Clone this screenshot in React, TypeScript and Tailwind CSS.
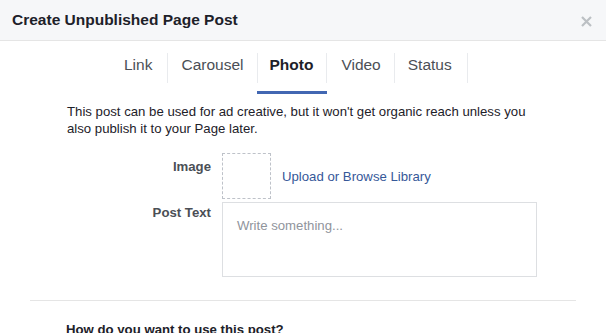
import React from "react";

const tabs = [
  { label: "Link", pad: "pl-[14px] pr-[15px]" },
  { label: "Carousel", pad: "pl-[13px] pr-[14px]" },
  { label: "Photo", pad: "pl-[11px] pr-[13px]" },
  { label: "Video", pad: "pl-[14px] pr-[13px]" },
  { label: "Status", pad: "pl-[13px] pr-[15px]" },
];

const App = () => {
  const active = "Photo";

  return (
    <div
      className="w-[606px] h-[333px] overflow-hidden bg-white"
      style={{ fontFamily: '"Liberation Sans", Arial, Helvetica, sans-serif' }}
    >
      <div className="h-[41px] bg-[#f6f7f9] border-b border-[#e5e5e5] flex items-center justify-between pl-[12px] pr-[14px]">
        <h1 className="text-[15.5px] font-bold text-[#1d2129] leading-[20px]">
          Create Unpublished Page Post
        </h1>
        <svg width="11" height="11" viewBox="0 0 11 11" className="mt-[2px]">
          <path d="M1 1L10 10M10 1L1 10" stroke="#bcc0c4" strokeWidth="2.2" />
        </svg>
      </div>

      {/* tabs */}
      <div className="flex pl-[110px] pt-[12px]">
        {tabs.map((tab) => (
          <div key={tab.label} className="flex flex-col">
            <div
              className={`h-[30px] pt-[3px] leading-[18px] border-r border-[#e9ebee] text-[15.5px] ${tab.pad} ${
                tab.label === active ? "font-bold text-[#1d2129]" : "text-[#4b4f56]"
              }`}
            >
              {tab.label}
            </div>
            <div
              className={`h-[3px] mt-[8px] -ml-[1px] ${
                tab.label === active ? "bg-[#4267b2]" : "bg-transparent"
              }`}
            />
          </div>
        ))}
      </div>

      <p className="mt-[9px] px-[67px] text-[13.2px] leading-[17px] text-[#1d2129]">
        This post can be used for ad creative, but it won't get organic reach unless you also
        publish it to your Page later.
      </p>

      <div className="mt-[16px] pl-[67px] flex flex-col gap-[3px]">
        <div className="flex items-start gap-[11px]">
          <div className="w-[144px] pt-[5px] text-right text-[13.2px] leading-[17px] font-bold text-[#4b4f56]">
            Image
          </div>
          <div className="flex items-center gap-[11px]">
            <div className="w-[49px] h-[46px] border border-dashed border-[#bec2c9]" />
            <a className="text-[13.2px] leading-[17px] text-[#365899] mt-[1px]">
              Upload or Browse Library
            </a>
          </div>
        </div>

        <div className="flex items-start gap-[11px]">
          <div className="w-[144px] pt-[2px] text-right text-[13.2px] leading-[17px] font-bold text-[#4b4f56]">
            Post Text
          </div>
          <div className="w-[315px] h-[75px] border border-[#dddfe2] pl-[14px] pt-[10px]">
            <span className="text-[13.2px] leading-[17px] text-[#90949c]">Write something...</span>
          </div>
        </div>
      </div>

      <div className="mt-[23px] mx-[30px] border-t border-[#e5e5e5]" />

      <h2 className="mt-[20px] pl-[66px] text-[13.2px] leading-[17px] font-bold text-[#1d2129]">
        How do you want to use this post?
      </h2>
    </div>
  );
};

export default App;
